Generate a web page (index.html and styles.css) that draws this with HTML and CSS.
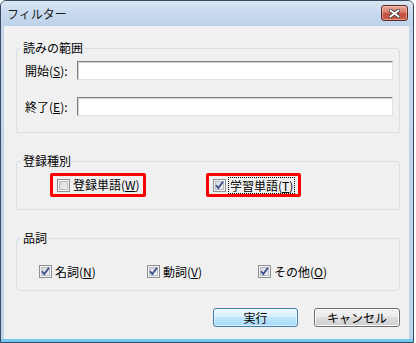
FILE: index.html
```html
<!DOCTYPE html>
<html lang="ja">
<head>
<meta charset="utf-8">
<title>フィルター</title>
<link rel="stylesheet" href="styles.css">
</head>
<body>
<div class="window">
  <div class="titlebar">
    <span class="title">フィルター</span>
    <button class="close" aria-label="閉じる">
      <svg width="11" height="9" viewBox="0 0 11 9"><path d="M1.5 1.5 L9.5 7.5 M9.5 1.5 L1.5 7.5" stroke="#3d3d3d" stroke-width="3.6" stroke-linecap="square" fill="none"/><path d="M1.5 1.5 L9.5 7.5 M9.5 1.5 L1.5 7.5" stroke="#ffffff" stroke-width="1.8" stroke-linecap="square" fill="none"/></svg>
    </button>
  </div>
  <div class="frame">
    <div class="client">
      <fieldset class="group">
        <legend>読みの範囲</legend>
        <div class="range">
          <div class="field"><span class="lbl">開始(<u>S</u>):</span><span class="input"></span></div>
          <div class="field"><span class="lbl">終了(<u>E</u>):</span><span class="input"></span></div>
        </div>
      </fieldset>

      <fieldset class="group gap-top">
        <legend>登録種別</legend>
        <div class="kinds">
          <div class="mark mark1">
            <span class="cb"></span>
            <span>登録単語(<u>W</u>)</span>
          </div>
          <div class="mark mark2">
            <span class="cb"><svg width="11" height="11" viewBox="0 0 11 11"><path d="M2 5.2 L4.3 8 L9 1.8" stroke="#3a4f8c" stroke-width="1.8" fill="none"/></svg></span>
            <span class="focus">学習単語(<u>T</u>)</span>
          </div>
        </div>
      </fieldset>

      <fieldset class="group gap-top">
        <legend>品詞</legend>
        <div class="parts">
          <div class="check w1">
            <span class="cb"><svg width="11" height="11" viewBox="0 0 11 11"><path d="M2 5.2 L4.3 8 L9 1.8" stroke="#3a4f8c" stroke-width="1.8" fill="none"/></svg></span>
            <span>名詞(<u>N</u>)</span>
          </div>
          <div class="check w2">
            <span class="cb"><svg width="11" height="11" viewBox="0 0 11 11"><path d="M2 5.2 L4.3 8 L9 1.8" stroke="#3a4f8c" stroke-width="1.8" fill="none"/></svg></span>
            <span>動詞(<u>V</u>)</span>
          </div>
          <div class="check">
            <span class="cb"><svg width="11" height="11" viewBox="0 0 11 11"><path d="M2 5.2 L4.3 8 L9 1.8" stroke="#3a4f8c" stroke-width="1.8" fill="none"/></svg></span>
            <span>その他(<u>O</u>)</span>
          </div>
        </div>
      </fieldset>

      <div class="btns">
        <button class="btn btn-ok">実行</button>
        <button class="btn btn-cancel">キャンセル</button>
      </div>
    </div>
  </div>
</div>
</body>
</html>
```

FILE: styles.css
```css
* { box-sizing: border-box; }
html, body { margin: 0; padding: 0; background: #ffffff; }
body {
  font-family: "Noto Sans CJK JP", "Noto Sans", sans-serif;
  font-size: 12px;
  line-height: 14px;
  color: #000;
}
u { text-decoration: underline; text-underline-offset: 1px; }

.window {
  width: 414px;
  height: 343px;
  border: 1px solid #3a4b5f;
  border-radius: 6px 6px 0 0;
  background: #c3d6ec;
  display: flex;
  flex-direction: column;
  overflow: hidden;
}

.titlebar {
  height: 25px;
  flex: none;
  display: flex;
  align-items: center;
  justify-content: space-between;
  padding: 0 5px 0 6px;
  background: linear-gradient(#dbe6f3, #c8d9ee 50%, #bdd2ea);
}
.title { font-size: 12px; color: #1a1a1a; }

.close {
  width: 27px;
  height: 16px;
  margin-top: -1px;
  padding: 0;
  border: 1px solid #5a2a26;
  border-radius: 3px;
  background: linear-gradient(#e9a99b, #d77c6b 45%, #c24e3b 55%, #c9604a);
  box-shadow: inset 0 0 0 1px rgba(255, 220, 210, 0.45);
  display: flex;
  align-items: center;
  justify-content: center;
}
.close svg { display: block; }

.frame {
  flex: 1;
  padding: 0 4px 3px 3px;
  background: linear-gradient(#c3d6ec, #bcd4ec calc(100% - 3px), #74c8ee calc(100% - 3px));
}

.client {
  height: 313px;
  background: #f0f0f0;
  padding: 15px 9px 0 12px;
  display: flex;
  flex-direction: column;
}

.group {
  margin: 0;
  padding: 0;
  min-width: 0;
  border: 1px solid #d5dfe5;
  border-radius: 3px;
}
.gap-top { margin-top: 21px; }
.group legend {
  margin-left: 4px;
  padding: 0 2px;
  line-height: 14px;
}

.range {
  padding: 6px 6px 16px 8px;
  display: flex;
  flex-direction: column;
  gap: 17px;
}
.field { display: flex; align-items: center; height: 19px; }
.lbl { width: 52px; flex: none; }
.input {
  flex: 1;
  height: 19px;
  background: #ffffff;
  border: 1px solid;
  border-color: #828282 #dfe3e8 #dfe3e8 #828282;
  box-shadow: inset 1px 1px 0 #d0d0d0;
}

.kinds {
  padding: 5px 0 12px 33px;
  display: flex;
  gap: 60px;
}
.mark {
  height: 24px;
  border: 3px solid #ff0000;
  border-radius: 2px;
  display: flex;
  align-items: center;
  padding-left: 4px;
  gap: 3px;
}
.mark1 { width: 96px; }
.mark2 { width: 95px; }
.focus { outline: 1px dotted #000; padding: 0 1px; line-height: 15px; }

.parts {
  padding: 18px 0 10px 22px;
  display: flex;
}
.check { display: flex; align-items: center; gap: 3px; height: 17px; }
.w1 { width: 108px; }
.w2 { width: 111px; }

.cb {
  width: 13px;
  height: 13px;
  flex: none;
  border: 1px solid #8e8f8f;
  background: linear-gradient(135deg, #cfd2d6, #f7f7f7);
  box-shadow: inset 0 0 0 1px #f4f4f4, inset 0 0 0 2px #b9bdc3;
  display: flex;
  align-items: center;
  justify-content: center;
}
.cb svg { display: block; }

.btns {
  margin-top: 17px;
  display: flex;
  justify-content: flex-end;
  gap: 16px;
}
.btn {
  height: 19px;
  padding: 0;
  border-radius: 3px;
  font: inherit;
  line-height: 17px;
  color: #000;
}
.btn-ok {
  width: 85px;
  border: 1px solid #3c7fb1;
  background: linear-gradient(#eaf6fd, #d9f0fc 50%, #bee6fd 50%, #a7d9f5);
  box-shadow: inset 0 0 0 1px rgba(255, 255, 255, 0.6);
}
.btn-cancel {
  width: 86px;
  border: 1px solid #707070;
  background: linear-gradient(#f2f2f2, #ebebeb 50%, #dddddd 50%, #cfcfcf);
  box-shadow: inset 0 0 0 1px #fcfcfc;
}
```
